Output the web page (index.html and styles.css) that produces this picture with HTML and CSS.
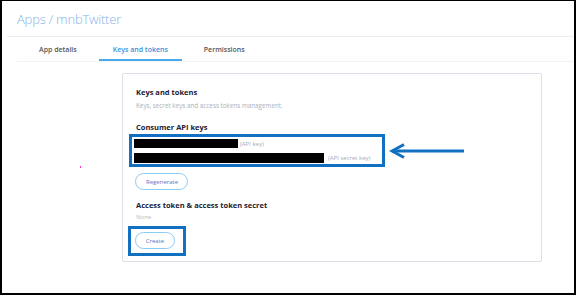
FILE: index.html
```html
<!DOCTYPE html>
<html lang="en">
<head>
<meta charset="UTF-8">
<meta name="viewport" content="width=device-width, initial-scale=1.0">
<title>Apps / mnbTwitter</title>
<link rel="stylesheet" href="styles.css">
</head>
<body>
  <div class="frame">
    <header class="app-header">
      <h1 class="app-title">Apps / mnbTwitter</h1>
    </header>

    <nav class="tabs">
      <a class="tab">App details</a>
      <a class="tab active">Keys and tokens</a>
      <a class="tab">Permissions</a>
    </nav>

    <span class="stray-mark"></span>

    <section class="card">
      <h2 class="card-title">Keys and tokens</h2>
      <p class="card-sub">Keys, secret keys and access tokens management.</p>

      <h3 class="section-title">Consumer API keys</h3>
      <div class="keys-row">
        <div class="highlight keys-box">
          <div class="key-line">
            <span class="redacted short"></span>
            <span class="key-label">(API key)</span>
          </div>
          <div class="key-line">
            <span class="redacted long"></span>
            <span class="key-label">(API secret key)</span>
          </div>
        </div>
        <svg class="arrow" width="76" height="16" viewBox="0 0 76 16">
          <path d="M3 8 H75" stroke="#1270c0" stroke-width="3" fill="none"/>
          <path d="M15 1.5 L3 8 L15 14.5" stroke="#1270c0" stroke-width="3" fill="none"/>
        </svg>
      </div>
      <button class="pill regen">Regenerate</button>

      <h3 class="section-title access">Access token &amp; access token secret</h3>
      <p class="none">None</p>
      <div class="highlight create-box">
        <button class="pill">Create</button>
      </div>
    </section>
  </div>
</body>
</html>
```

FILE: styles.css
```css
body {
  margin: 0;
  padding: 0;
  font-family: "Open Sans", "Noto Sans", Arial, sans-serif;
  background: #fff;
}

.frame {
  position: relative;
  box-sizing: border-box;
  width: 576px;
  height: 295px;
  border-style: solid;
  border-color: #000;
  border-width: 1px 2px 2px 2px;
  overflow: hidden;
}

.app-header {
  margin-left: 5px;
  height: 35px;
  border-bottom: 1px solid #ececec;
}

.app-title {
  margin: 0;
  padding: 9px 0 0 10px;
  font-size: 13px;
  font-weight: 300;
  line-height: 19px;
  color: #86b2e8;
  letter-spacing: -0.2px;
}

.tabs {
  display: flex;
  gap: 8px;
  margin-left: 15px;
  padding-left: 8px;
  border-bottom: 1px solid #f2f2f2;
}

.tab {
  display: block;
  padding: 0 14px;
  height: 22px;
  line-height: 25px;
  font-size: 7px;
  font-weight: 600;
  color: #555;
  border-bottom: 2px solid transparent;
}

.tab.active {
  color: #3b8fdc;
  border-bottom-color: #4aaaea;
}

.stray-mark {
  position: absolute;
  left: 78px;
  top: 165px;
  width: 1px;
  height: 2px;
  background: #ff2ed0;
}

.card {
  margin: 11px 0 0 120px;
  width: 420px;
  height: 189px;
  box-sizing: border-box;
  border: 1px solid #d9e0e7;
  border-radius: 2px;
  padding: 13px 0 0 13px;
}

.card-title,
.section-title {
  margin: 0;
  font-size: 7.5px;
  font-weight: 700;
  line-height: 11px;
  color: #1c2033;
}

.card-sub {
  margin: 3px 0 0;
  font-size: 6.3px;
  line-height: 9px;
  color: #aab2bb;
}

.section-title {
  margin-top: 12px;
}

.keys-row {
  display: flex;
  align-items: center;
  gap: 4px;
  margin-top: 1px;
}

.highlight {
  border: 3px solid #1270c0;
}

.keys-box {
  margin-left: -7px;
  width: 248px;
  padding: 1px 0 1px 2px;
}

.key-line {
  display: flex;
  align-items: center;
  gap: 2px;
  height: 11px;
}

.key-line + .key-line {
  margin-top: 3px;
}

.redacted {
  display: block;
  background: #000;
}

.redacted.short {
  width: 104px;
  height: 9px;
}

.redacted.long {
  width: 190px;
  height: 10px;
  margin-right: 2px;
}

.key-label {
  font-size: 6px;
  color: #a3abb4;
}

.arrow {
  display: block;
}

.pill {
  display: block;
  height: 17px;
  padding: 0 10px;
  border: 1px solid #8ccbf3;
  border-radius: 9px;
  background: #fff;
  font-family: inherit;
  font-size: 6px;
  color: #6271c9;
}

.regen {
  margin: 6px 0 0 -1px;
  width: 53px;
}

.section-title.access {
  margin-top: 10px;
}

.none {
  margin: 2px 0 0;
  font-size: 6px;
  line-height: 9px;
  color: #b6bcc3;
}

.create-box {
  margin: 4px 0 0 -8px;
  width: 48px;
  padding: 3px 0 4px 4px;
}

.create-box .pill {
  width: 40px;
  padding: 0;
}
```
